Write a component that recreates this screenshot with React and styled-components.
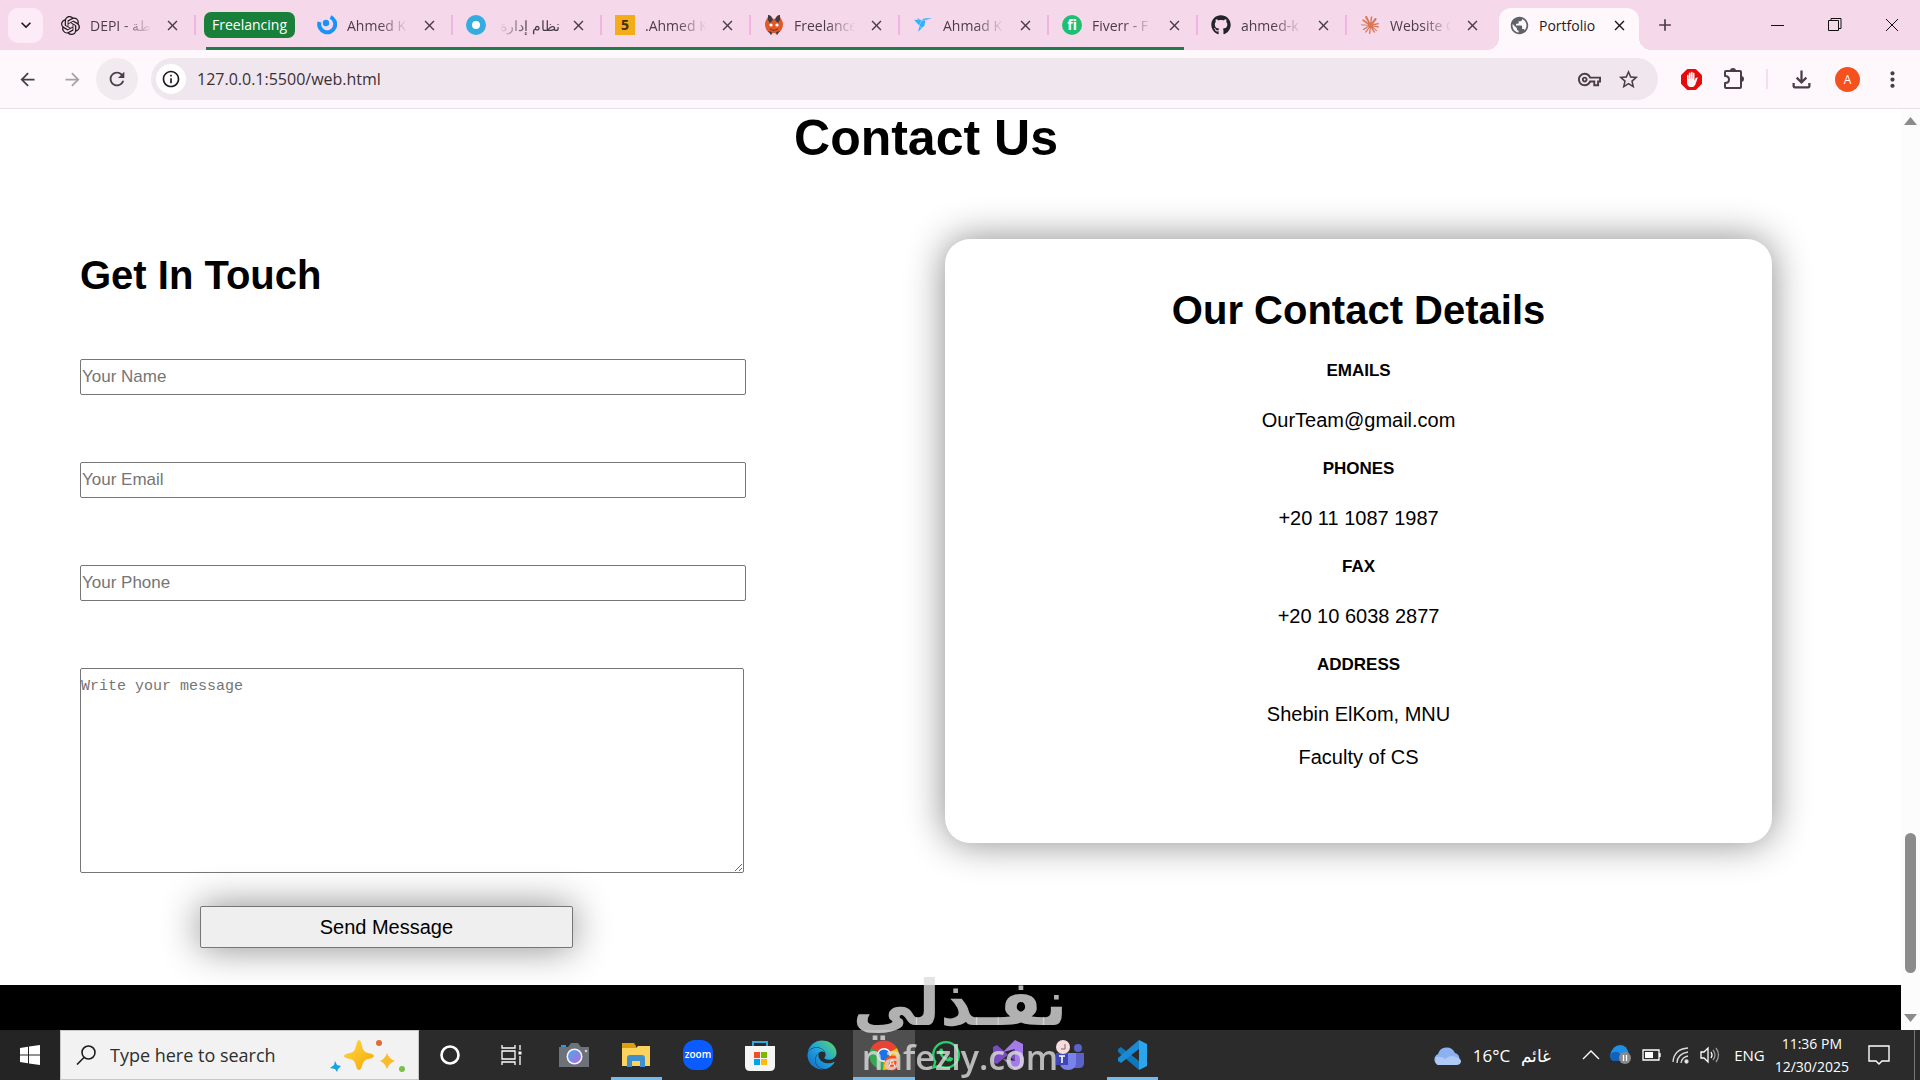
import styled, { createGlobalStyle } from "styled-components";
import { SiOpenai, SiFreelancer, SiClaude, SiAdblock } from "react-icons/si";
import { FaGithub, FaWhatsapp, FaEdge } from "react-icons/fa";
import {
  MdPublic,
  MdOutlineVpnKey,
  MdStarOutline,
  MdOutlineExtension,
  MdMoreVert,
  MdArrowBack,
  MdArrowForward,
  MdRefresh,
  MdOutlineInfo,
  MdAdd,
  MdClose,
  MdKeyboardArrowDown,
  MdOutlineFileDownload,
} from "react-icons/md";

const GlobalStyle = createGlobalStyle`
  * {
    box-sizing: border-box;
  }
  body {
    margin: 0;
    font-family: "Liberation Sans", Arial, sans-serif;
    background: #fff;
    color: #000;
  }
  button {
    font: inherit;
    color: inherit;
    cursor: pointer;
  }
  svg {
    display: block;
    flex-shrink: 0;
  }
`;

const Screen = styled.div`
  display: flex;
  flex-direction: column;
  min-height: 100vh;
`;

/* browser */

const TabStrip = styled.header`
  display: flex;
  align-items: stretch;
  height: 50px;
  padding-left: 8px;
  background: #f6d8eb;
  color: #4b3d48;
  font: 14px "Open Sans", "Noto Sans", sans-serif;
`;

const PlainButton = styled.button`
  display: flex;
  align-items: center;
  justify-content: center;
  align-self: center;
  flex-shrink: 0;
  width: ${(p) => p.$size || 20}px;
  height: ${(p) => p.$size || 20}px;
  padding: 0;
  border: none;
  border-radius: 50%;
  background: ${(p) => p.$bg || "none"};
`;

const TabSearch = styled(PlainButton)`
  margin-right: 3px;
  border-radius: 10px;
  background: #fdebf8;
  color: #1f1a1e;
`;

const Tab = styled.div`
  display: flex;
  align-items: center;
  width: 149px;
  height: 50px;
  padding: 0 14px;
  flex-shrink: 0;

  &::after {
    content: "";
    width: 2px;
    height: 20px;
    margin-left: auto;
    margin-right: -15px;
    background: ${(p) => (p.$last ? "transparent" : "#f0b5e2")};
  }
`;

const ActiveTab = styled.div`
  position: relative;
  display: flex;
  align-items: center;
  width: 140px;
  height: 42px;
  margin: 8px 8px 0 4px;
  padding: 0 10px 8px;
  border-radius: 12px 12px 0 0;
  background: #fef7fb;
  color: #1f1a1e;
  flex-shrink: 0;

  &::before,
  &::after {
    content: "";
    position: absolute;
    bottom: 0;
    width: 12px;
    height: 12px;
  }
  &::before {
    right: 100%;
    background: radial-gradient(circle at 0 0, transparent 12px, #fef7fb 12px);
  }
  &::after {
    left: 100%;
    background: radial-gradient(circle at 100% 0, transparent 12px, #fef7fb 12px);
  }
`;

const TabIcon = styled.span`
  display: flex;
  align-items: center;
  justify-content: center;
  width: 20px;
  height: 20px;
  margin-right: 10px;
  flex-shrink: 0;
`;

const TabTitle = styled.span`
  width: 64px;
  margin-right: 8px;
  overflow: hidden;
  white-space: nowrap;
  direction: ${(p) => (p.$rtl ? "rtl" : "ltr")};
  mask-image: ${(p) =>
    p.$solid
      ? "none"
      : `linear-gradient(to ${p.$rtl ? "left" : "right"}, #000 50%, transparent 96%)`};
`;

const GroupChip = styled.button`
  height: 26px;
  margin: 0 8px 0 9px;
  padding: 0 8px;
  border: none;
  border-radius: 7px;
  background: #19803c;
  color: #fff;
  line-height: 20px;
`;

const TabGroup = styled.div`
  display: flex;
  align-items: center;
  flex-shrink: 0;
  height: 50px;
  background: linear-gradient(#247a4b, #247a4b) 11px 47px / calc(100% - 24px) 3px no-repeat;
`;

const FiverrMark = styled.span`
  width: 20px;
  height: 20px;
  border-radius: 50%;
  background: #1dbf73;
  color: #fff;
  font: bold 14px/19px "Open Sans", sans-serif;
  text-align: center;
`;

const FiveMark = styled(FiverrMark)`
  border-radius: 0;
  background: #f4ac18;
  color: #3d2f10;
`;

const WindowButtons = styled.div`
  display: flex;
  align-items: center;
  margin-left: auto;
  color: #111;
`;

const WindowButton = styled.button`
  display: flex;
  justify-content: center;
  width: 57px;
  padding: 0;
  border: none;
  background: none;
`;

const Toolbar = styled.nav`
  display: flex;
  align-items: center;
  height: 59px;
  padding: 0 15px 0 6px;
  border-bottom: 1px solid #e9dfe6;
  background: #fef7fb;
  color: #4b3d48;
`;

const NavButtons = styled.div`
  display: flex;
  align-items: center;
  gap: 3px;
  margin-right: 13px;
`;

const AddressBar = styled.div`
  display: flex;
  align-items: center;
  flex: 1;
  height: 42px;
  padding: 0 18px 0 5px;
  gap: 16px;
  border-radius: 21px;
  background: #f0e6ee;
`;

const AddressInput = styled.input`
  flex: 1;
  min-width: 0;
  margin-left: -5px;
  padding: 0;
  border: none;
  background: none;
  color: #3a3038;
  font: 16px "Open Sans", "Noto Sans", sans-serif;
`;

const Extensions = styled.div`
  display: flex;
  align-items: center;
  gap: 20px;
  margin-left: 23px;
`;

const Divider = styled.span`
  width: 2px;
  height: 20px;
  background: #f8dcf2;
`;

const Avatar = styled.button`
  width: 25px;
  height: 25px;
  padding: 0;
  border: none;
  border-radius: 50%;
  background: #f4511e;
  color: #fff;
  font: 12px "Open Sans", sans-serif;
`;

/* page */

const Viewport = styled.div`
  display: flex;
  flex: 1;
`;

const Page = styled.main`
  display: flex;
  flex-direction: column;
  flex: 1;
  min-width: 0;
`;

const ContactSection = styled.section`
  padding: 1px 129px 37px 80px;
`;

const PageTitle = styled.h1`
  margin: 0 0 72px;
  font-size: 50px;
  line-height: 57px;
  text-align: center;
`;

const Columns = styled.div`
  display: grid;
  grid-template-columns: 29fr 36fr;
  column-gap: 199px;
  align-items: start;
`;

const Heading = styled.h2`
  margin: 0 0 2px;
  font-size: 40px;
  line-height: 46px;
`;

const Form = styled.form`
  display: flex;
  flex-direction: column;
  padding-top: 13px;

  ${Heading} {
    margin-bottom: 61px;
  }
`;

const Input = styled.input`
  width: 100%;
  height: 36px;
  margin-bottom: 67px;
  padding: 0 1px 1px;
  border: 1px solid #767676;
  border-radius: 2px;
  background: #fff;
  font: 17px "Liberation Sans", Arial, sans-serif;

  &::placeholder {
    color: #757575;
  }
`;

const TextArea = styled.textarea`
  width: calc(100% - 2px);
  height: 205px;
  padding: 8px 0;
  border: 1px solid #767676;
  border-radius: 2px;
  background: #fff;
  font: 15px/20px "Liberation Mono", "Courier New", monospace;

  &::placeholder {
    color: #757575;
  }
`;

const SendButton = styled.button`
  width: 56%;
  height: 42px;
  margin: 33px 0 0 18%;
  border: 1px solid #767676;
  border-radius: 2px;
  background: #efefef;
  box-shadow: 0 0 38px #888;
  font-size: 20px;
`;

const Details = styled.aside`
  display: flex;
  flex-direction: column;
  align-items: center;
  padding: 48px 20px 73px;
  border-radius: 25px;
  background: #fff;
  box-shadow: 0 0 38px #888;
  text-align: center;
`;

const DetailLabel = styled.h3`
  margin: 26px 0;
  font-size: 17px;
  line-height: 20px;
`;

const DetailText = styled.p`
  margin: 0;
  font-size: 20px;
  line-height: 26px;

  & + & {
    margin-top: 17px;
  }
`;

const PageFooter = styled.footer`
  flex: 1;
  min-height: 45px;
  background: #000;
`;

const ScrollBar = styled.div`
  display: flex;
  flex-direction: column;
  align-items: center;
  width: 19px;
  padding: 8px 0;
  background: #fcfcfc;
`;

const ScrollThumb = styled.div`
  width: 11px;
  height: 140px;
  margin: auto 0 41px;
  border-radius: 6px;
  background: #8b8b8b;
`;

/* taskbar */

const TaskBar = styled.footer`
  display: flex;
  align-items: stretch;
  height: 50px;
  background: #2b2b2b;
  color: #fff;
  font: 17px "Open Sans", "Noto Sans", sans-serif;
`;

const StartButton = styled.button`
  display: flex;
  align-items: center;
  justify-content: center;
  width: 60px;
  padding: 0;
  border: none;
  background: #242424;
`;

const SearchBox = styled.label`
  display: flex;
  align-items: center;
  width: 359px;
  padding: 0 10px 0 15px;
  border: 1px solid #c8c8c8;
  background: #f2f2f2;
`;

const SearchInput = styled.input`
  flex: 1;
  min-width: 0;
  margin-left: 14px;
  padding: 0;
  border: none;
  background: none;
  font: 18px "Open Sans", "Noto Sans", sans-serif;

  &::placeholder {
    color: #2e2e2e;
  }
`;

const TaskButton = styled.button`
  display: flex;
  align-items: center;
  justify-content: center;
  width: 62px;
  padding: 0;
  border: none;
  background: ${(p) => {
    if (p.$active) return "linear-gradient(#76b9ed, #76b9ed) 0 47px / 100% 3px no-repeat #4f4f4f";
    if (p.$open) return "linear-gradient(#76b9ed, #76b9ed) 6px 47px / 51px 3px no-repeat";
    return "none";
  }};
`;

const ZoomMark = styled.span`
  width: 30px;
  height: 30px;
  border-radius: 12px;
  background: #0b5cff;
  font: 600 10px/28px "Open Sans", sans-serif;
`;

const Tray = styled.div`
  display: flex;
  align-items: center;
  margin-left: auto;
  gap: 10px;
`;

const Weather = styled.div`
  display: flex;
  align-items: center;
  gap: 11px;
  margin-right: 21px;
`;

const Language = styled.span`
  margin-left: 4px;
  font-size: 15px;
`;

const Clock = styled.time`
  margin-right: 9px;
  font-size: 14px;
  line-height: 23px;
  text-align: center;
`;

const ShowDesktop = styled.span`
  align-self: stretch;
  width: 6px;
  margin-left: 14px;
  border-left: 1px solid #777;
`;

const Watermark = styled.div`
  position: fixed;
  left: 0;
  right: 0;
  bottom: 0;
  display: flex;
  flex-direction: column;
  align-items: center;
  color: rgba(221, 221, 221, 0.8);
  pointer-events: none;
`;

const WatermarkArabic = styled.span`
  font: bold 63px/60px "DejaVu Sans", sans-serif;
`;

const WatermarkLatin = styled.span`
  font: 600 34px/46px "Open Sans", sans-serif;
`;

const SwirlIcon = () => (
  <svg width="20" height="22" viewBox="0 0 20 22">
    <path d="M2.500 8a8 8 0 1 0 11-5" fill="none" stroke="#1a94f4" strokeWidth="4" />
    <circle cx="9" cy="9" r="3.200" fill="#1a94f4" />
  </svg>
);

const RingIcon = () => (
  <svg width="20" height="20" viewBox="0 0 20 20">
    <circle cx="10" cy="10" r="7" fill="#fff" stroke="#35acdf" strokeWidth="6" />
  </svg>
);

const FoxIcon = () => (
  <svg width="18" height="20" viewBox="0 0 18 20">
    <path d="M3 0c4 0 4 4 6 4s2-4 6-4c-1 2 3 5 3 9 0 5-3 8-5 9l-1 2-2-2H8l-2 2-1-2c-3-1-5-5-5-9s4-7 3-9z" fill="#e0592a" />
    <path d="M3 0c3 0 4 3 5 5L5 8 3 5zM15 0c-3 0-4 3-5 5l3 3 2-3zM3 16l3 4 1-3zM15 16l-3 4-1-3z" fill="#35404a" />
    <circle cx="6" cy="10" r="1.600" fill="#fff" />
    <circle cx="12" cy="10" r="1.600" fill="#fff" />
    <path d="M5 14q4 3 8 0" fill="none" stroke="#8c2d15" />
  </svg>
);

const ExtensionIcon = () => (
  <svg width="24" height="24" viewBox="0 0 24 24" fill="none" stroke="currentColor" strokeWidth="2">
    <path d="M4 4h14q1 0 1 1v15q0 1-1 1H4q-1 0-1-1v-4q4 0 4-3.500T3 9V5q0-1 1-1z" strokeLinejoin="round" />
    <path d="M9 4a2 2 0 0 1 4 0zM19 10a2 2 0 0 1 0 4z" fill="currentColor" />
  </svg>
);

const StartIcon = () => (
  <svg width="20" height="20" viewBox="0 0 20 20" fill="#fff">
    <path d="M0 3l8-1.200v7.700H0zM9 1.600L20 0v9.500H9zM0 10.500h8v7.700L0 17zM9 10.500h11V20L9 18.400z" />
  </svg>
);

const SearchIcon = () => (
  <svg width="20" height="20" viewBox="0 0 20 20" fill="none" stroke="#1c1c1c" strokeWidth="1.600">
    <circle cx="12.500" cy="7.500" r="6.500" />
    <path d="M8 12.500L1 19.500" />
  </svg>
);

const Sparkles = () => (
  <svg width="78" height="34" viewBox="0 0 78 34">
    <defs>
      <linearGradient id="spark" x1="0" y1="0" x2="1" y2="1">
        <stop offset="0" stopColor="#ffd94a" />
        <stop offset="1" stopColor="#f5a800" />
      </linearGradient>
    </defs>
    <path d="M29 2q2 0 3 6 1 6 6 7 6 1 6 3t-6 3q-5 1-6 7-1 4-3 4t-3-4q-1-6-6-7-6-1-6-3t6-3q5-1 6-7 1-6 3-6z" fill="url(#spark)" />
    <path d="M57 15q2 6 8 8-6 2-8 8-2-6-7-8 5-2 7-8z" fill="#fbbc2a" />
    <path d="M5 23l2 4 4 1-3 3-1 3-2-3-5-1 4-3z" fill="#15a3e6" />
    <circle cx="49" cy="5" r="3" fill="#e06a35" />
    <circle cx="72" cy="31" r="3" fill="#7cc04b" />
  </svg>
);

const CortanaIcon = () => (
  <svg width="22" height="22" viewBox="0 0 22 22">
    <circle cx="11" cy="11" r="8.500" fill="none" stroke="#fff" strokeWidth="2.600" />
  </svg>
);

const TaskViewIcon = () => (
  <svg width="22" height="20" viewBox="0 0 22 20" fill="none" stroke="#fff" strokeWidth="1.300">
    <path d="M1 0v3h13V0M1 20v-3h13v3M1 6h13v8H1zM19 0v5M19 11v9" />
    <path d="M17.500 8h3" strokeWidth="3" />
  </svg>
);

const CameraIcon = () => (
  <svg width="32" height="26" viewBox="0 0 32 26">
    <defs>
      <linearGradient id="lens" x1="0" y1="0" x2="1" y2="1">
        <stop offset="0" stopColor="#4aa8e8" />
        <stop offset="1" stopColor="#b46ae0" />
      </linearGradient>
    </defs>
    <path d="M3 3h5v4H3z" fill="#2b9be0" />
    <path d="M1 5h9l3-4h7l3 4h8v20H1z" fill="#6d7278" />
    <circle cx="16.500" cy="14.500" r="8" fill="#f4f4fb" />
    <circle cx="16.500" cy="14.500" r="6.500" fill="url(#lens)" />
    <circle cx="28" cy="9" r="1.300" fill="#ccc" />
  </svg>
);

const FolderIcon = () => (
  <svg width="30" height="26" viewBox="0 0 30 26">
    <path d="M1 1h12l2 3v5H1z" fill="#dd9e0c" />
    <path d="M1 6h14l2-2h12v20H1z" fill="#fbd45f" />
    <path d="M6 25v-9q0-3 3-3h12q3 0 3 3v9h-5v-6h-8v6z" fill="#3f90cf" />
  </svg>
);

const StoreIcon = () => (
  <svg width="30" height="31" viewBox="0 0 30 31">
    <path d="M8 7V2h14v5" fill="none" stroke="#35a7dd" strokeWidth="2" />
    <path d="M0 6h30v20q0 5-5 5H5q-5 0-5-5z" fill="#f5f5f5" />
    <path d="M9 12h6v6H9z" fill="#f04f23" />
    <path d="M16 12h6v6h-6z" fill="#7db701" />
    <path d="M9 19h6v6H9z" fill="#00a3ee" />
    <path d="M16 19h6v6h-6z" fill="#fdb813" />
  </svg>
);

const EdgeIcon = ({ size }) => (
  <>
    <svg width="0" height="0">
      <defs>
        <linearGradient id="edge" x1="0" y1="1" x2="1" y2="0">
          <stop offset="0" stopColor="#1366c0" />
          <stop offset="0.500" stopColor="#1fa2e0" />
          <stop offset="1" stopColor="#5fdc5c" />
        </linearGradient>
      </defs>
    </svg>
    <FaEdge size={size} fill="url(#edge)" />
  </>
);

const ChromeIcon = () => (
  <svg width="31" height="31" viewBox="0 0 31 31">
    <path d="M15 15L2 8a15 15 0 0 1 26 0z" fill="#ea4335" />
    <path d="M15 15L2 8a15 15 0 0 0 12 22z" fill="#34a853" />
    <path d="M15 15l13-7a15 15 0 0 1-14 22z" fill="#fbbc05" />
    <circle cx="15" cy="15" r="7" fill="#fff" />
    <circle cx="15" cy="15" r="5.500" fill="#1a73e8" />
    <circle cx="23" cy="23" r="7.500" fill="#f4511e" />
    <path d="M20 27l3-8 3 8M21 24h4" fill="none" stroke="#fff" />
  </svg>
);

const VisualStudioIcon = () => (
  <svg width="30" height="30" viewBox="0 0 30 30">
    <path d="M0 7l4-2L22 21V9L4 24l-4-2z" fill="#7a4cc0" />
    <path d="M22 0l8 4v22l-8 4-12-11 12 2V9l-12 3z" fill="#a47be8" />
  </svg>
);

const TeamsIcon = () => (
  <svg width="30" height="30" viewBox="0 0 30 30">
    <circle cx="23" cy="8" r="4" fill="#5b62c9" />
    <path d="M18 13h11v10q0 5-5 5h-6z" fill="#5b62c9" />
    <path d="M5 13h16v9q0 8-8 8t-8-8z" fill="#7b83eb" />
    <path d="M1 13h12v12H1z" fill="#3f47b5" />
    <path d="M4 16h6M7 16v7" stroke="#fff" strokeWidth="1.600" />
    <circle cx="8" cy="7" r="7" fill="#f6dcdc" />
    <path d="M10 4v5H6" fill="none" stroke="#8a6060" />
  </svg>
);

const CodeIcon = () => (
  <svg width="30" height="30" viewBox="0 0 30 30">
    <path d="M1 9l3-2 18 14v9L1 12z" fill="#1177bb" />
    <path d="M1 21l3 2L22 9V0L1 18z" fill="#1b8ad3" />
    <path d="M22 0l8 4v22l-8 4z" fill="#2ba6ee" />
  </svg>
);

const CloudIcon = () => (
  <svg width="30" height="21" viewBox="0 0 30 21">
    <path d="M6 20a6 6 0 0 1 0-11 9 9 0 0 1 17-1 6.500 6.500 0 0 1 1 12z" fill="#8db0f0" />
    <path d="M6 20a6 6 0 0 1-2-8q6-1 9 2 5-5 11-2 5 2 5 4 0 4-5 4z" fill="#aec8f8" />
  </svg>
);

const CaretIcon = () => (
  <svg width="18" height="10" viewBox="0 0 18 10" fill="none" stroke="#fff" strokeWidth="1.400">
    <path d="M1 9l8-8 8 8" />
  </svg>
);

const SyncIcon = () => (
  <svg width="22" height="20" viewBox="0 0 22 20">
    <path d="M0 10Q3 0 10 0q7 0 9 9l-9 7H4q-4-1-4-6z" fill="#1e8fe8" />
    <path d="M0 10q3-4 8-3 3 1 2 9H4q-4-1-4-6z" fill="#1560b8" />
    <circle cx="15" cy="13" r="6" fill="#8b8b8b" />
    <path d="M13.500 10v6M16.500 10v6" stroke="#fff" strokeWidth="1.300" />
  </svg>
);

const BatteryIcon = () => (
  <svg width="20" height="12" viewBox="0 0 20 12">
    <path d="M1 1h16v10H1zM18 4v4" fill="none" stroke="#fff" strokeWidth="1.300" />
    <path d="M3 3h8v6H3z" fill="#fff" />
  </svg>
);

const WifiIcon = () => (
  <svg width="18" height="18" viewBox="0 0 18 18" fill="none" stroke="#ddd" strokeWidth="1.300">
    <path d="M1 16Q2 3 16 2M5 17Q5 8 16 6M9 17q1-6 7-7" />
    <circle cx="14.500" cy="15.500" r="1.500" fill="#fff" />
  </svg>
);

const SoundIcon = () => (
  <svg width="20" height="18" viewBox="0 0 20 18" fill="none" stroke="#fff" strokeWidth="1.300">
    <path d="M1 6h3l4-4v14l-4-4H1zM11 6q2 3 0 6" />
    <path d="M13 4q4 5 0 10M16 2q5 7 0 14" stroke="#999" />
  </svg>
);

const NoticeIcon = () => (
  <svg width="22" height="22" viewBox="0 0 22 22" fill="none" stroke="#fff" strokeWidth="1.400">
    <path d="M1 2h20v15h-7l-3 3-3-3H1z" />
  </svg>
);

const groupTabs = [
  { title: "Ahmed K", icon: <SwirlIcon /> },
  { title: "نظام إدارة", icon: <RingIcon />, rtl: true },
  { title: ".Ahmed K", icon: <FiveMark>5</FiveMark> },
  { title: "Freelance", icon: <FoxIcon /> },
  { title: "Ahmad K", icon: <SiFreelancer size={18} color="#2db2fe" /> },
  { title: "Fiverr - F", icon: <FiverrMark>fi</FiverrMark> },
];

const looseTabs = [
  { title: "ahmed-k", icon: <FaGithub size={20} color="#24222a" /> },
  { title: "Website C", icon: <SiClaude size={18} color="#d97757" />, last: true },
];

const details = [
  { label: "EMAILS", lines: ["OurTeam@gmail.com"] },
  { label: "PHONES", lines: ["+20 11 1087 1987"] },
  { label: "FAX", lines: ["+20 10 6038 2877"] },
  { label: "ADDRESS", lines: ["Shebin ElKom, MNU", "Faculty of CS"] },
];

const apps = [
  { name: "Cortana", icon: <CortanaIcon /> },
  { name: "Task View", icon: <TaskViewIcon /> },
  { name: "Camera", icon: <CameraIcon /> },
  { name: "File Explorer", icon: <FolderIcon />, open: true },
  { name: "Zoom", icon: <ZoomMark>zoom</ZoomMark> },
  { name: "Store", icon: <StoreIcon /> },
  { name: "Edge", icon: <EdgeIcon size={30} /> },
  { name: "Chrome", icon: <ChromeIcon />, active: true },
  { name: "WhatsApp", icon: <FaWhatsapp size={32} color="#25d366" /> },
  { name: "Visual Studio", icon: <VisualStudioIcon /> },
  { name: "Teams", icon: <TeamsIcon /> },
  { name: "Visual Studio Code", icon: <CodeIcon />, open: true },
];

const BrowserTab = ({ title, icon, rtl, last }) => (
  <Tab $last={last}>
    <TabIcon>{icon}</TabIcon>
    <TabTitle $rtl={rtl}>{title}</TabTitle>
    <PlainButton aria-label="Close tab">
      <MdClose size={17} />
    </PlainButton>
  </Tab>
);

const Browser = () => (
  <>
    <TabStrip>
      <TabSearch $size={35} aria-label="Search tabs">
        <MdKeyboardArrowDown size={20} />
      </TabSearch>
      <BrowserTab title="DEPI - طة" icon={<SiOpenai size={19} color="#1f1a1e" />} />
      <TabGroup>
        <GroupChip>Freelancing</GroupChip>
        {groupTabs.map((tab, i) => (
          <BrowserTab key={i} {...tab} />
        ))}
      </TabGroup>
      {looseTabs.map((tab) => (
        <BrowserTab key={tab.title} {...tab} />
      ))}
      <ActiveTab>
        <TabIcon>
          <MdPublic size={21} color="#5f6368" />
        </TabIcon>
        <TabTitle $solid>Portfolio</TabTitle>
        <PlainButton aria-label="Close tab">
          <MdClose size={17} />
        </PlainButton>
      </ActiveTab>
      <PlainButton $size={36} aria-label="New tab">
        <MdAdd size={20} />
      </PlainButton>
      <WindowButtons>
        <WindowButton aria-label="Minimize">
          <svg width="13" height="13" stroke="#111">
            <path d="M0 6.500h13" />
          </svg>
        </WindowButton>
        <WindowButton aria-label="Restore">
          <svg width="14" height="14" fill="none" stroke="#111">
            <path d="M.5 2.500h10v10H.5zM3 2.500v-2h10v10h-2" />
          </svg>
        </WindowButton>
        <WindowButton aria-label="Close">
          <svg width="14" height="14" stroke="#111">
            <path d="M1 1l12 12M13 1L1 13" />
          </svg>
        </WindowButton>
      </WindowButtons>
    </TabStrip>
    <Toolbar>
      <NavButtons>
        <PlainButton $size={42} aria-label="Back">
          <MdArrowBack size={21} />
        </PlainButton>
        <PlainButton $size={42} aria-label="Forward">
          <MdArrowForward size={21} color="#a99fa6" />
        </PlainButton>
        <PlainButton $size={42} $bg="#f1eaef" aria-label="Reload">
          <MdRefresh size={22} />
        </PlainButton>
      </NavButtons>
      <AddressBar>
        <PlainButton $size={30} $bg="#fff" aria-label="Site information">
          <MdOutlineInfo size={20} color="#1f1a1e" />
        </PlainButton>
        <AddressInput aria-label="Address" defaultValue="127.0.0.1:5500/web.html" />
        <MdOutlineVpnKey size={23} />
        <MdStarOutline size={23} />
      </AddressBar>
      <Extensions>
        <SiAdblock size={21} color="#e40d0d" />
        <ExtensionIcon />
        <Divider />
        <MdOutlineFileDownload size={27} />
        <Avatar>A</Avatar>
        <MdMoreVert size={25} />
      </Extensions>
    </Toolbar>
  </>
);

const Contact = () => {
  const handleSubmit = (e) => {
    e.preventDefault();
  };

  return (
    <ContactSection>
      <PageTitle>Contact Us</PageTitle>
      <Columns>
        <Form onSubmit={handleSubmit}>
          <Heading>Get In Touch</Heading>
          <Input type="text" name="name" aria-label="Your Name" placeholder="Your Name" />
          <Input type="email" name="email" aria-label="Your Email" placeholder="Your Email" />
          <Input type="tel" name="phone" aria-label="Your Phone" placeholder="Your Phone" />
          <TextArea name="message" aria-label="Write your message" placeholder="Write your message" />
          <SendButton type="submit">Send Message</SendButton>
        </Form>
        <Details>
          <Heading>Our Contact Details</Heading>
          {details.map(({ label, lines }) => (
            <div key={label}>
              <DetailLabel>{label}</DetailLabel>
              {lines.map((line) => (
                <DetailText key={line}>{line}</DetailText>
              ))}
            </div>
          ))}
        </Details>
      </Columns>
    </ContactSection>
  );
};

const SystemBar = () => (
  <TaskBar>
    <StartButton aria-label="Start">
      <StartIcon />
    </StartButton>
    <SearchBox>
      <SearchIcon />
      <SearchInput aria-label="Search" placeholder="Type here to search" />
      <Sparkles />
    </SearchBox>
    {apps.map(({ name, icon, open, active }) => (
      <TaskButton key={name} aria-label={name} $open={open} $active={active}>
        {icon}
      </TaskButton>
    ))}
    <Tray>
      <Weather>
        <CloudIcon />
        <span>16°C</span>
        <span>غائم</span>
      </Weather>
      <CaretIcon />
      <SyncIcon />
      <BatteryIcon />
      <WifiIcon />
      <SoundIcon />
      <Language>ENG</Language>
      <Clock>
        11:36 PM
        <br />
        12/30/2025
      </Clock>
      <NoticeIcon />
      <ShowDesktop />
    </Tray>
  </TaskBar>
);

const App = () => (
  <Screen>
    <GlobalStyle />
    <Browser />
    <Viewport>
      <Page>
        <Contact />
        <PageFooter />
      </Page>
      <ScrollBar>
        <svg width="13" height="8" fill="#8b8b8b">
          <path d="M0 8l6.500-8L13 8z" />
        </svg>
        <ScrollThumb />
        <svg width="13" height="8" fill="#8b8b8b">
          <path d="M0 0l6.500 8L13 0z" />
        </svg>
      </ScrollBar>
    </Viewport>
    <SystemBar />
    <Watermark>
      <WatermarkArabic>نفـذلي</WatermarkArabic>
      <WatermarkLatin>nafezly.com</WatermarkLatin>
    </Watermark>
  </Screen>
);

export default App;
